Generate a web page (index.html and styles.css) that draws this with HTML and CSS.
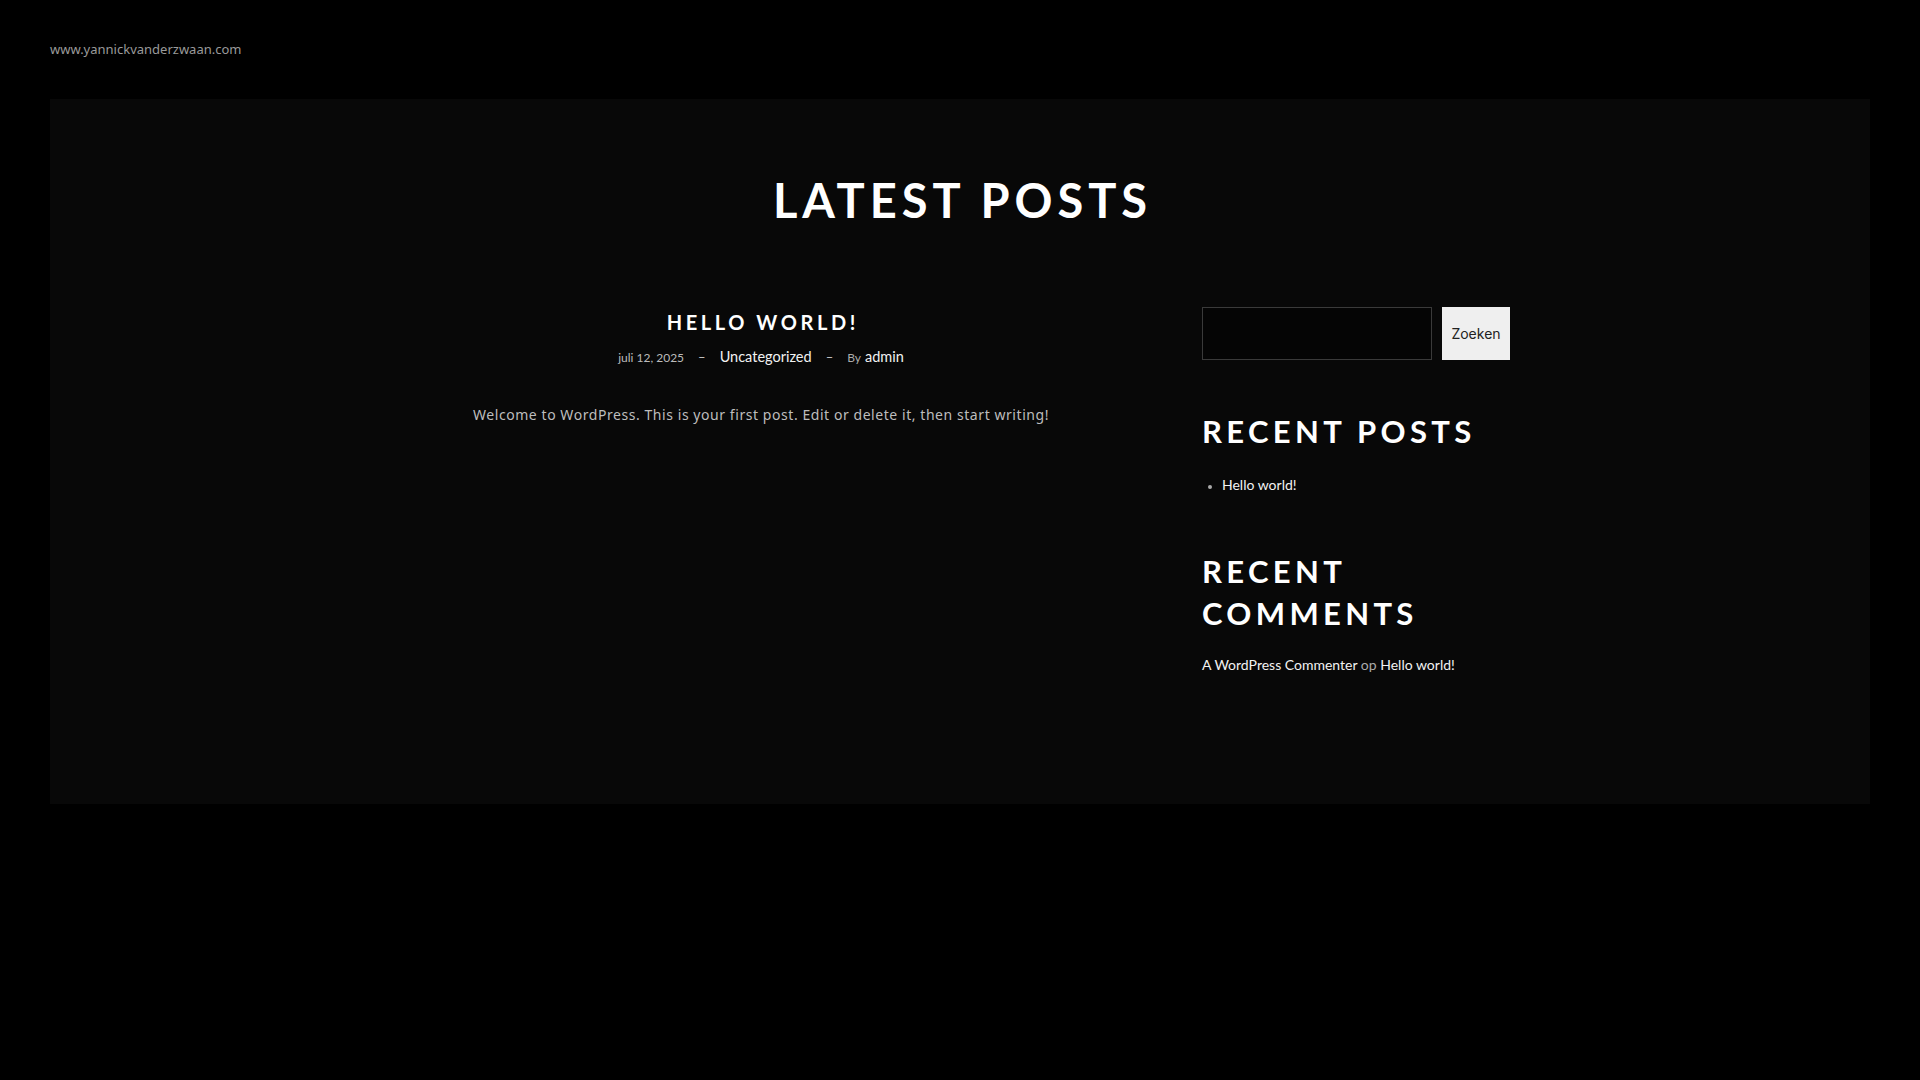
FILE: index.html
```html
<!DOCTYPE html>
<html lang="nl">
<head>
<meta charset="utf-8">
<title>Latest Posts</title>
<link rel="stylesheet" href="styles.css">
</head>
<body>
<header class="site-header">
  <a class="site-title" href="#">www.yannickvanderzwaan.com</a>
</header>
<main class="card">
  <h1 class="page-title">LATEST POSTS</h1>
  <div class="layout">
    <article class="post">
      <h2 class="post-title">HELLO WORLD!</h2>
      <div class="meta">
        <span class="date">juli 12, 2025</span>
        <span class="sep">–</span>
        <span class="cat">Uncategorized</span>
        <span class="sep">–</span>
        <span class="by">By</span>
        <span class="author">admin</span>
      </div>
      <p class="excerpt">Welcome to WordPress. This is your first post. Edit or delete it, then start writing!</p>
    </article>
    <aside class="sidebar">
      <form class="search">
        <input class="search-input" type="text" aria-label="Zoeken">
        <button class="search-btn" type="button">Zoeken</button>
      </form>
      <section class="widget">
        <h3 class="widget-title">RECENT POSTS</h3>
        <ul class="widget-list">
          <li><a href="#">Hello world!</a></li>
        </ul>
      </section>
      <section class="widget">
        <h3 class="widget-title">RECENT<br>COMMENTS</h3>
        <p class="comment-line"><a href="#">A WordPress Commenter</a> <span class="op">op</span> <a href="#">Hello world!</a></p>
      </section>
    </aside>
  </div>
</main>
</body>
</html>
```

FILE: styles.css
```css
html, body {
  margin: 0;
  padding: 0;
  background: #000;
  color: #eee;
  font-family: "Noto Sans", sans-serif;
}

a {
  color: inherit;
  text-decoration: none;
}

.site-header {
  padding: 40px 50px 0;
  height: 99px;
  box-sizing: border-box;
}

.site-title {
  display: block;
  font-family: "Noto Sans", sans-serif;
  font-size: 13px;
  line-height: 18px;
  color: #9a9a9a;
}

.card {
  display: block;
  margin: 0 50px;
  background: #080808;
  height: 705px;
  box-sizing: border-box;
  padding-top: 73px;
}

.page-title {
  margin: 0;
  text-align: center;
  font-family: "Lato", sans-serif;
  font-weight: 700;
  font-size: 47px;
  line-height: 56px;
  letter-spacing: 0.105em;
  color: #fff;
  padding-left: 0.105em;
}

.layout {
  width: 1100px;
  margin: 79px auto 0;
  display: grid;
  grid-template-columns: 702px 308px;
  column-gap: 90px;
}

.post {
  text-align: center;
  padding-top: 2px;
}

.post-title {
  margin: 0;
  font-family: "Lato", sans-serif;
  font-weight: 700;
  font-size: 20px;
  line-height: 26px;
  letter-spacing: 0.18em;
  padding-left: 0.18em;
  color: #fff;
}

.meta {
  margin-top: 12px;
  display: flex;
  justify-content: center;
  align-items: baseline;
  font-family: "Lato", sans-serif;
  line-height: 20px;
}

.date {
  font-size: 12px;
  color: #bbb;
}

.sep {
  font-size: 13px;
  color: #ccc;
  margin: 0 14px;
}

.cat {
  font-size: 14.5px;
  color: #f2f2f2;
}

.by {
  font-size: 12px;
  color: #aaa;
  margin-right: 4px;
}

.author {
  font-size: 14.5px;
  color: #f2f2f2;
}

.excerpt {
  margin: 36px 0 0;
  font-family: "Noto Sans", sans-serif;
  font-size: 14px;
  line-height: 22px;
  letter-spacing: 0.04em;
  color: #bdbdbd;
}

.sidebar {
  font-family: "Lato", sans-serif;
}

.search {
  display: flex;
  gap: 10px;
  margin: 0;
}

.search-input {
  width: 230px;
  height: 53px;
  box-sizing: border-box;
  background: #050505;
  border: 1px solid #3a3a3a;
  margin: 0;
  padding: 0 10px;
  color: #eee;
}

.search-btn {
  width: 68px;
  height: 53px;
  border: 0;
  margin: 0;
  background: #efefef;
  color: #222;
  font-family: "Inter", sans-serif;
  font-size: 14px;
  padding: 0;
  cursor: pointer;
}

.widget {
  margin-top: 50px;
}

.widget + .widget {
  margin-top: 54px;
}

.widget-title {
  margin: 0;
  font-family: "Lato", sans-serif;
  font-weight: 700;
  font-size: 31px;
  line-height: 42px;
  letter-spacing: 0.14em;
  color: #fff;
}

.widget-list {
  margin: 22px 0 0;
  padding-left: 20px;
  font-size: 14px;
  line-height: 22px;
  color: #f2f2f2;
}

.widget-list li::marker {
  color: #aaa;
  font-size: 11px;
}

.comment-line {
  margin: 20px 0 0;
  font-size: 14px;
  line-height: 22px;
  color: #f2f2f2;
}

.op {
  color: #aaa;
}
```
